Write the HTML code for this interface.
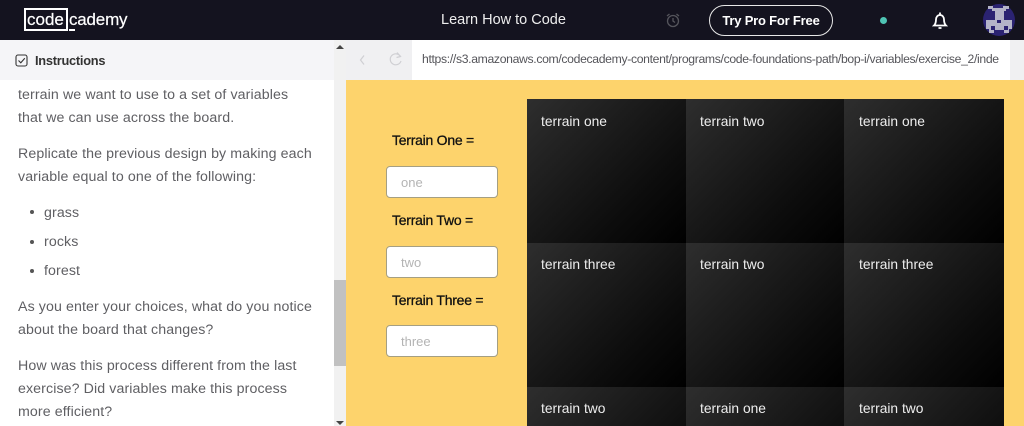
<!DOCTYPE html>
<html><head><meta charset="utf-8"><style>
html,body{margin:0;padding:0;width:1024px;height:426px;overflow:hidden;background:#fff;font-family:"Liberation Sans",sans-serif}
#w{position:relative;width:1024px;height:426px;overflow:hidden}
.a{position:absolute;white-space:nowrap}
.t{font-size:14.2px;letter-spacing:.1px;color:#5f5f63;left:18px;line-height:20px}
.b{left:30px;width:4px;height:4px;border-radius:50%;background:#555;position:absolute}
.l{font-size:14px;color:#111;line-height:20px;font-weight:400;-webkit-text-stroke:.3px #111;letter-spacing:-.25px}
.i{position:absolute;left:386px;width:110px;height:30px;background:#fff;border:1px solid #a59f82;border-radius:4px;color:#b4b4b4;font-size:13px;line-height:32px;text-indent:14px}
.c{position:absolute;width:159px;height:144px;background:linear-gradient(135deg,#2e2e2e 0%,#181818 45%,#0c0c0c 70%,#000 100%) no-repeat;background-size:159px 144px;overflow:hidden}
.c span{position:absolute;left:14px;top:12px;color:#eee;font-size:13.800px;line-height:20px;white-space:nowrap}
.r{width:160px;background-size:160px 144px}
.r span{left:15px}
.s{height:39px}
</style></head><body><div id="w">
<div class="a" style="left:0;top:0;width:1024px;height:40px;background:#14131f"></div>
<div class="a" style="left:24px;top:8px;width:40px;height:19px;border:2px solid #fff"></div>
<div class="a" style="left:27px;top:9px;color:#fff;font-size:17px;line-height:22px;-webkit-text-stroke:.2px #fff">code</div>
<div class="a" style="left:69px;top:9px;color:#fff;font-size:17px;line-height:22px;-webkit-text-stroke:.2px #fff;letter-spacing:-.2px">cademy</div>
<div class="a" style="left:69px;top:29px;width:6px;height:2px;background:#fff"></div>
<div class="a" style="left:441px;top:10px;color:#eee;font-size:14.500px;line-height:20px">Learn How to Code</div>
<svg class="a" style="left:665px;top:12px" width="16" height="17" viewBox="0 0 16 17" fill="none" stroke="#55555c" stroke-width="1.3"><circle cx="8" cy="9" r="5.500"/><path d="M8 6v3l2 1.500M2 4l2.500-2M14 4l-2.500-2"/></svg>
<div class="a" style="left:709px;top:5px;width:122px;height:29px;border:1.500px solid #e8e8e8;border-radius:16px;color:#fff;font-size:13px;font-weight:700;line-height:29px;text-align:center;letter-spacing:-.2px">Try Pro For Free</div>
<div class="a" style="left:880px;top:17px;width:7px;height:7px;border-radius:50%;background:#4fc4b4"></div>
<svg class="a" style="left:932px;top:11px" width="16" height="19" viewBox="0 0 16 19" fill="none" stroke="#fff" stroke-width="1.800"><path d="M2 14.500h12c-1.500-1.500-2-3-2-6 0-2.500-1.700-4.500-4-4.500S4 6 4 8.500c0 3-.5 4.500-2 6zM8 1.500v2"/><path d="M6.500 17h3"/></svg>
<svg class="a" style="left:983px;top:4px" width="32" height="32" viewBox="0 0 32 32" shape-rendering="crispEdges"><circle cx="16" cy="16" r="16" fill="#2b2372" shape-rendering="auto"/><path fill="#b4b4c8" d="M5 2h5v3H5zM20 2h6v3h-6zM9 4h14v3h-2v9h-9V7H9zM3 16h26v9h-3v4h-5v-3H11v3H6v-4H3z"/><path fill="#2b2372" d="M8 22h4v4H8zM21 22h4v4h-4zM14 16h4v3h-4z"/></svg>

<div class="a" style="left:0;top:40px;width:334px;height:40px;background:#f5f5f8"></div>
<div class="a" style="left:334px;top:40px;width:12px;height:386px;background:#f1f1f1"></div>
<div class="a" style="left:334px;top:280px;width:12px;height:86px;background:#c1c1c1"></div>
<div class="a" style="left:336px;top:45px;width:0;height:0;border:4px solid transparent;border-top:0;border-bottom:4px solid #444"></div>
<div class="a" style="left:336px;top:421px;width:0;height:0;border:4px solid transparent;border-bottom:0;border-top:4px solid #444"></div>
<svg class="a" style="left:15px;top:54px" width="14" height="14" viewBox="0 0 14 14" fill="none" stroke="#333" stroke-width="1.100"><rect x="1" y="1" width="11" height="11" rx="2"/><path d="M3.500 6.500l2.300 2.300 4-4.500"/></svg>
<div class="a" style="left:35px;top:51px;font-size:12.800px;font-weight:700;color:#333;line-height:20px;letter-spacing:-.25px">Instructions</div>
<div class="a t" style="top:85px">terrain we want to use to a set of variables</div>
<div class="a t" style="top:108px">that we can use across the board.</div>
<div class="a t" style="top:144px">Replicate the previous design by making each</div>
<div class="a t" style="top:167px">variable equal to one of the following:</div>
<div class="b" style="top:210px"></div><div class="a t" style="left:44px;top:203px">grass</div>
<div class="b" style="top:240px"></div><div class="a t" style="left:44px;top:232px">rocks</div>
<div class="b" style="top:269px"></div><div class="a t" style="left:44px;top:261px">forest</div>
<div class="a t" style="top:297px">As you enter your choices, what do you notice</div>
<div class="a t" style="top:320px">about the board that changes?</div>
<div class="a t" style="top:356px">How was this process different from the last</div>
<div class="a t" style="top:379px">exercise? Did variables make this process</div>
<div class="a t" style="top:402px">more efficient?</div>

<div class="a" style="left:346px;top:40px;width:66px;height:40px;background:#f0f0f2"></div>
<div class="a" style="left:1010px;top:40px;width:14px;height:40px;background:#f0f0f2"></div>
<svg class="a" style="left:357px;top:52px" width="12" height="16" viewBox="0 0 12 16" fill="none" stroke="#cfcfd3" stroke-width="1.200"><path d="M7 3.500L3.500 8 7 12.500"/></svg>
<svg class="a" style="left:389px;top:51px" width="14" height="17" viewBox="0 0 14 17" fill="none" stroke="#cfcfd3" stroke-width="1.200"><path d="M11.500 5.500A5.500 5.500 0 1 0 12 10M8 1.500l3.500 4-4 1"/></svg>
<div class="a" style="left:422px;top:49px;font-size:12.200px;color:#55555a;line-height:20px;letter-spacing:-.33px">https://s3.amazonaws.com/codecademy-content/programs/code-foundations-path/bop-i/variables/exercise_2/inde</div>

<div class="a" style="left:346px;top:80px;width:678px;height:346px;background:#fdd36c"></div>
<div class="a l" style="left:392px;top:130px">Terrain One =</div>
<div class="a l" style="left:392px;top:210px">Terrain Two =</div>
<div class="a l" style="left:392px;top:290px">Terrain Three =</div>
<div class="i" style="top:166px">one</div>
<div class="i" style="top:246px">two</div>
<div class="i" style="top:325px">three</div>

<div class="c" style="left:527px;top:99px"><span style="top:12.500px">terrain one</span></div>
<div class="c" style="left:686px;top:99px"><span style="top:12.500px">terrain two</span></div>
<div class="c r" style="left:844px;top:99px"><span style="top:12.500px">terrain one</span></div>
<div class="c" style="left:527px;top:243px"><span>terrain three</span></div>
<div class="c" style="left:686px;top:243px"><span>terrain two</span></div>
<div class="c r" style="left:844px;top:243px"><span>terrain three</span></div>
<div class="c s" style="left:527px;top:387px"><span>terrain two</span></div>
<div class="c s" style="left:686px;top:387px"><span>terrain one</span></div>
<div class="c r s" style="left:844px;top:387px"><span>terrain two</span></div>
</div></body></html>
